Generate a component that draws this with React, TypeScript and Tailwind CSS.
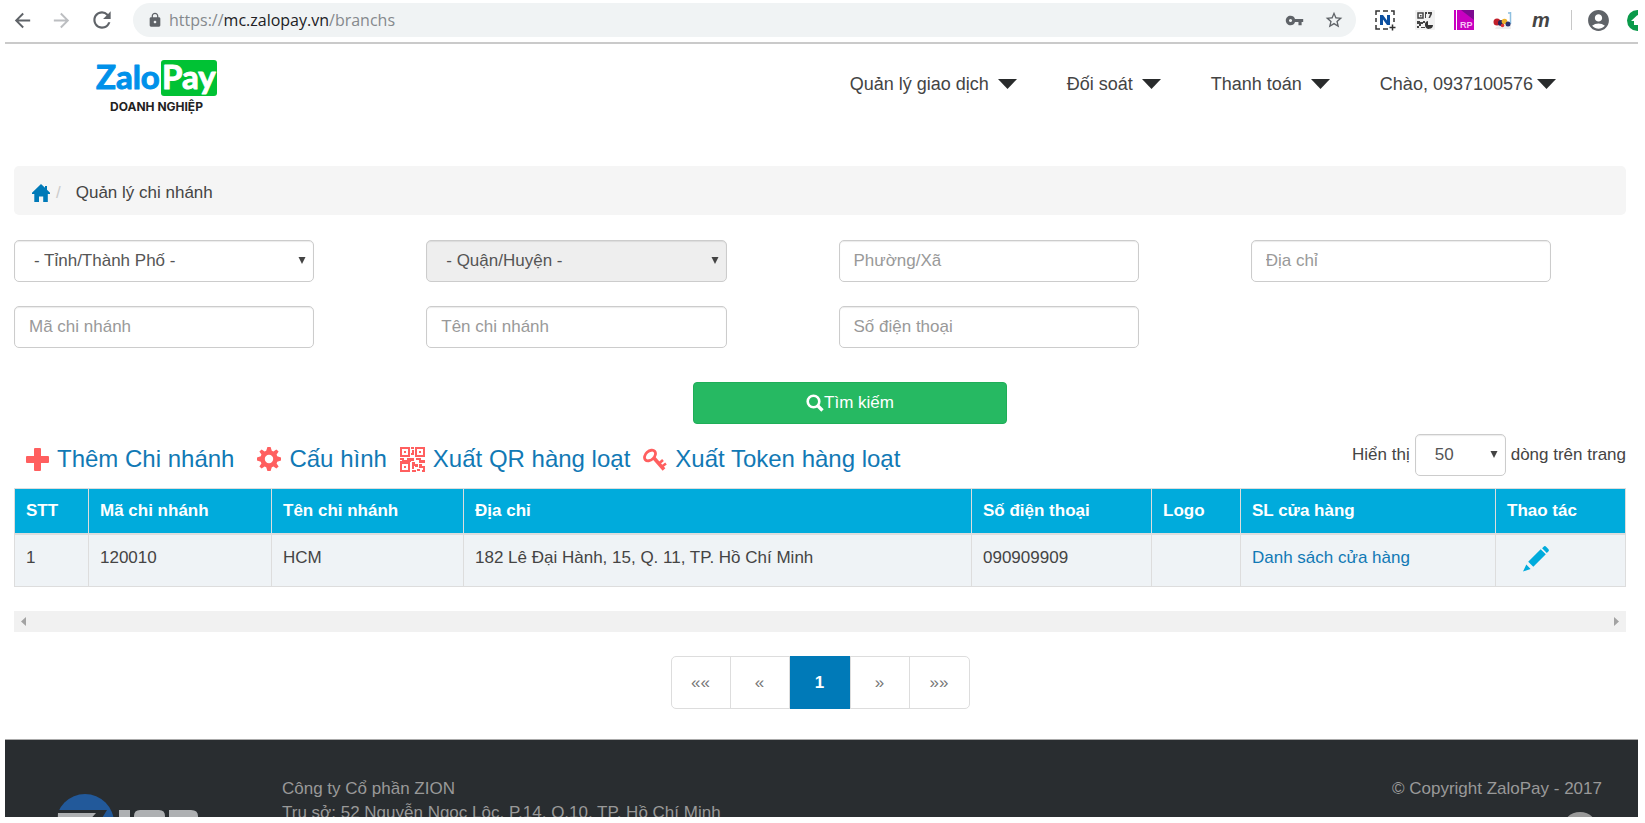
import { useState } from "react";
import type { InputHTMLAttributes, ReactNode, SelectHTMLAttributes } from "react";
import clsx from "clsx";
import {
  MdAccountCircle,
  MdArrowBack,
  MdArrowForward,
  MdLock,
  MdRefresh,
  MdStarBorder,
  MdVpnKey,
} from "react-icons/md";

const NAV_ITEMS = ["Quản lý giao dịch", "Đối soát", "Thanh toán"];

const COLUMNS = [
  { label: "STT", width: "w-[74px]" },
  { label: "Mã chi nhánh", width: "w-[183px]" },
  { label: "Tên chi nhánh", width: "w-[192px]" },
  { label: "Địa chỉ", width: "" },
  { label: "Số điện thoại", width: "w-[180px]" },
  { label: "Logo", width: "w-[89px]" },
  { label: "SL cửa hàng", width: "w-[255px]" },
  { label: "Thao tác", width: "w-[130px]" },
];

const BRANCHES = [
  {
    id: 1,
    code: "120010",
    name: "HCM",
    address: "182 Lê Đại Hành, 15, Q. 11, TP. Hồ Chí Minh",
    phone: "090909909",
  },
];

const PAGES = ["««", "«", "1", "»", "»»"];

const Caret = () => (
  <svg viewBox="0 0 19 10" className="h-[10px] w-[19px] fill-[#292b2c]">
    <path d="M0 0h19L9.500 10z" />
  </svg>
);

const HomeIcon = () => (
  <svg viewBox="0 0 18 18" className="h-[18px] w-[18px] fill-[#007ab8]">
    <path d="M9 0l4 3.800V2h2v3.700l3 3.100v1.200h-2.200V18h-4.600v-5.500H7V18H2.300v-8H0V8.800z" />
  </svg>
);

const SearchIcon = () => (
  <svg viewBox="0 0 18 18" className="h-[18px] w-[18px]" fill="none" stroke="currentColor">
    <circle cx="7.500" cy="7.500" r="5.800" strokeWidth="2.600" />
    <path d="M11.500 11.500l5 5" strokeWidth="3.400" />
  </svg>
);

const PlusIcon = () => (
  <svg viewBox="0 0 23 23" className="h-[23px] w-[23px] fill-[#ff5f5f]">
    <path d="M9 0h5q1 0 1 1v7h7q1 0 1 1v5q0 1-1 1h-7v7q0 1-1 1H9q-1 0-1-1v-7H1q-1 0-1-1V9q0-1 1-1h7V1q0-1 1-1z" />
  </svg>
);

const CogIcon = () => (
  <svg viewBox="-12 -12 24 24" className="h-6 w-6 fill-[#ff5f5f]">
    <path
      fillRule="evenodd"
      d="M-2.800-8.200L-1.600-12H1.600L2.800-8.200 4.400-7.600 7.400-9.600 9.600-7.400 7.600-4.400 8.200-2.800 12-1.600V1.600L8.200 2.800 7.600 4.400 9.600 7.400 7.400 9.600 4.400 7.600 2.800 8.200 1.600 12H-1.600L-2.800 8.200-4.400 7.600-7.400 9.600-9.600 7.400-7.600 4.400-8.200 2.800-12 1.600V-1.600L-8.200-2.800-7.600-4.400-9.600-7.400-7.400-9.600-4.400-7.600zM0-4.200A4.200 4.200 0 1 0 0 4.200 4.200 4.200 0 1 0 0-4.200z"
    />
  </svg>
);

const QrIcon = () => (
  <svg viewBox="0 0 25 25" className="h-[25px] w-[25px]" shapeRendering="crispEdges">
    <g fill="none" stroke="#ff5f5f" strokeWidth="2">
      <rect x="1" y="1" width="8" height="8" />
      <rect x="16" y="1" width="8" height="8" />
      <rect x="1" y="16" width="8" height="8" />
    </g>
    <path
      fill="#ff5f5f"
      d="M4 4h2v2H4zM19 4h2v2h-2zM4 19h2v2H4zM11 0h3v2h-3zM12 3h2v5h-3V6h1zM0 11h4v2h3v-2h7v3h-3v1H0v-1h2v-1H0zM16 11h5v2h4v3h-6v-3h-3zM12 15h3v2h3v3h-3v-1h-1v3h-2zM19 17h3v2h3v4h-2v-2h-4zM12 23h4v2h-4zM17 22h3v2h-3zM22 23h3v2h-3z"
    />
  </svg>
);

const KeyIcon = () => (
  <svg viewBox="0 0 24 23" className="h-[23px] w-6" fill="none" stroke="#ff5f5f">
    <ellipse cx="7" cy="7.500" rx="6.300" ry="4.300" strokeWidth="2.800" transform="rotate(-42 7 7.500)" />
    <path d="M10.500 9.500L21 21.500" strokeWidth="3.600" />
    <path d="M16 15.500l4-3.500M19 18.500l4-3" strokeWidth="2.600" />
  </svg>
);

const PencilIcon = () => (
  <svg viewBox="0 0 26 26" className="h-[26px] w-[26px] fill-[#00abdc]">
    <path d="M20.600.700a1.800 1.800 0 0 1 2.500 0l2.200 2.200a1.800 1.800 0 0 1 0 2.500l-1.500 1.500L19.100 2.200zM17.700 3.200L22.800 8.300 10.300 20.800 5.200 15.700zM3.300 18.600L7.600 22.900 0 25.500z" />
  </svg>
);

const ClipperIcon = () => (
  <svg viewBox="0 0 21 21" className="h-[21px] w-[21px]" fill="none">
    <path
      d="M1 5V1h4M8 1h5M16 1h3v4M1 8v4M1 15v4h4M19 8v4M8 19h5"
      stroke="#333"
      strokeWidth="1.500"
    />
    <path d="M5 15V5h3l4 5.500V5h3v10h-3L8 9.500V15z" fill="#0b4fa0" />
    <path d="M17.500 14.500v6M14.500 17.500h6" stroke="#333" strokeWidth="1.500" />
  </svg>
);

const QrExtensionIcon = () => (
  <svg viewBox="0 0 20 20" className="h-5 w-5">
    <rect width="20" height="20" rx="1" fill="#f1f1f1" />
    <rect x="3" y="3" width="5" height="5" fill="none" stroke="#444" strokeWidth="1.500" />
    <path
      fill="#444"
      d="M5 5h1.500v1.500H5zM10 2h2v2h-1v4h-1zM13 2h4v2l-2 4h-1.500l1.500-4h-2zM2 11h3v1h3v2H6v2H4v-2H2zM8 11h2v2H8zM2 16h2v2H2zM6 17h4v1H6z"
    />
    <path d="M13 11v4h5a4 4 0 1 1-5-4z" fill="#333" />
  </svg>
);

const RpIcon = () => (
  <svg viewBox="0 0 20 20" className="h-5 w-5">
    <rect width="20" height="20" fill="#c800c0" />
    <path d="M7 0h13v10z" fill="#7d0a90" />
    <path d="M2.500 0v20" stroke="#fff" />
    <text x="6" y="18" fill="#f7c4f5" fontSize="9" fontWeight="700" fontFamily="Liberation Sans, sans-serif">
      RP
    </text>
  </svg>
);

const BallsIcon = () => (
  <svg viewBox="0 0 20 20" className="h-5 w-5">
    <path d="M3 17l15-4v6H2z" fill="#eee" />
    <path d="M17.500 2v12M15 3h3" stroke="#8fc0e0" strokeWidth="1.500" />
    <circle cx="4" cy="12" r="3.500" fill="#c2202b" />
    <circle cx="8" cy="13" r="3" fill="#26265e" />
    <circle cx="11.500" cy="11.500" r="2.800" fill="#edb12c" />
    <circle cx="15" cy="14" r="2.500" fill="#28306e" />
    <circle cx="9.500" cy="15.500" r="1.800" fill="#d33" />
  </svg>
);

const BrowserBar = () => (
  <div className="flex h-11 items-center overflow-hidden border-b-2 border-[#cacaca] pl-[6px] pb-[2px] text-[#5f6368]">
    <button aria-label="Back" className="mr-4">
      <MdArrowBack size={23} />
    </button>
    <button aria-label="Forward" className="mr-4 text-[#bcbec1]">
      <MdArrowForward size={23} />
    </button>
    <button aria-label="Reload" className="mr-[18px]">
      <MdRefresh size={26} />
    </button>
    <div className="flex h-[34px] flex-1 items-center rounded-full bg-[#f0f3f4] pl-[14px] pr-3">
      <MdLock size={16} />
      <p className="ml-[6px] flex-1 font-['Open_Sans',sans-serif] text-base text-[#85898d]">
        https://<span className="text-[#202124]">mc.zalopay.vn</span>/branchs
      </p>
      <MdVpnKey size={19} className="mr-5" />
      <MdStarBorder size={20} />
    </div>
    <div className="flex items-center gap-[19px] pl-[19px]">
      <ClipperIcon />
      <QrExtensionIcon />
      <RpIcon />
      <BallsIcon />
      <span className="w-5 text-xl leading-5 font-bold italic text-[#444]">m</span>
      <span className="h-5 w-px bg-[#c8c8c8]" />
    </div>
    <MdAccountCircle size={25} className="ml-[14px]" />
    <div className="ml-4 flex h-[21px] w-[11px] shrink-0 overflow-hidden">
      <svg viewBox="0 0 21 21" className="h-[21px] w-[21px] shrink-0">
        <circle cx="10.500" cy="10.500" r="10.500" fill="#0a9a4a" />
        <path d="M4 11l6.500-6 6.500 6h-3v4H7v-4z" fill="#fff" />
      </svg>
    </div>
  </div>
);

const Logo = () => (
  <a href="#" className="flex flex-col items-center">
    <svg viewBox="0 0 123 36" className="h-9 w-[123px] overflow-visible">
      <rect x="66" y="0" width="56" height="36" rx="3" fill="#00c234" />
      <g
        fontFamily="Lato, sans-serif"
        fontSize="33"
        fontWeight="700"
        strokeWidth="1"
        strokeLinejoin="round"
      >
        <text x="1" y="29" fill="#0091ea" stroke="#0091ea">
          Zalo
        </text>
        <text x="67" y="29" fill="#fff" stroke="#fff">
          Pay
        </text>
      </g>
    </svg>
    <span className="mt-1 font-['Inter',sans-serif] text-xs leading-[14px] font-bold text-[#222]">
      DOANH NGHIỆP
    </span>
  </a>
);

const Header = () => (
  <header className="flex items-start justify-between pt-4 pr-[82px] pb-[52px] pl-[90px]">
    <Logo />
    <nav className="mt-3 flex gap-[50px] text-lg leading-6">
      {NAV_ITEMS.map((item) => (
        <button key={item} className="flex items-center gap-[9px]">
          {item}
          <Caret />
        </button>
      ))}
      <button className="flex items-center gap-1">
        Chào, 0937100576
        <Caret />
      </button>
    </nav>
  </header>
);

const FIELD =
  "h-[42px] w-full rounded-[5px] border border-[#ccc] shadow-[inset_0_1px_1px_rgba(0,0,0,0.08)] outline-none";

const TextField = (props: InputHTMLAttributes<HTMLInputElement>) => (
  <input
    type="text"
    aria-label={props.placeholder}
    className={clsx(FIELD, "bg-white px-[14px] placeholder:text-[#999]")}
    {...props}
  />
);

type SelectFieldProps = SelectHTMLAttributes<HTMLSelectElement> & {
  label: string;
  children: ReactNode;
};

const SelectField = ({ label, children, ...props }: SelectFieldProps) => (
  <div className="relative">
    <select
      aria-label={label}
      className={clsx(
        FIELD,
        "appearance-none pr-5 pl-[19px] text-[#555] opacity-100",
        props.disabled ? "bg-[#eee]" : "bg-white"
      )}
      {...props}
    >
      {children}
    </select>
    <svg
      viewBox="0 0 8 8"
      className="pointer-events-none absolute top-[17px] right-2 h-[7px] w-2 fill-[#444]"
    >
      <path d="M0 0h8L4 8z" />
    </svg>
  </div>
);

const SearchForm = () => (
  <form className="mt-[25px]" onSubmit={(e) => e.preventDefault()}>
    <div className="mr-[75px] grid grid-cols-4 gap-x-28 gap-y-6">
      <SelectField label="Tỉnh/Thành Phố">
        <option>- Tỉnh/Thành Phố -</option>
      </SelectField>
      <SelectField label="Quận/Huyện" disabled>
        <option>- Quận/Huyện -</option>
      </SelectField>
      <TextField placeholder="Phường/Xã" />
      <TextField placeholder="Địa chỉ" />
      <TextField placeholder="Mã chi nhánh" />
      <TextField placeholder="Tên chi nhánh" />
      <TextField placeholder="Số điện thoại" />
    </div>
    <div className="mt-[34px] flex justify-center pl-[60px]">
      <button
        type="submit"
        className="flex h-[42px] w-[314px] items-center justify-center rounded-[4px] border border-[#1fae58] bg-[#26b962] text-white"
      >
        <SearchIcon />
        Tìm kiếm
      </button>
    </div>
  </form>
);

const ActionLink = ({ icon, children }: { icon: ReactNode; children: ReactNode }) => (
  <a href="#" className="flex items-center gap-2 text-2xl leading-8 text-[#1179b5]">
    {icon}
    {children}
  </a>
);

const Toolbar = () => {
  const [pageSize, setPageSize] = useState("50");

  return (
    <div className="mt-[10px] flex items-end justify-between">
      <div className="flex gap-[13px] pb-px pl-3">
        <div className="mr-[10px]">
          <ActionLink icon={<PlusIcon />}>Thêm Chi nhánh</ActionLink>
        </div>
        <ActionLink icon={<CogIcon />}>Cấu hình</ActionLink>
        <ActionLink icon={<QrIcon />}>Xuất QR hàng loạt</ActionLink>
        <ActionLink icon={<KeyIcon />}>Xuất Token hàng loạt</ActionLink>
      </div>
      <div className="flex items-center gap-[5px]">
        <span>Hiển thị</span>
        <div className="w-[91px]">
          <SelectField
            label="Hiển thị"
            value={pageSize}
            onChange={(e) => setPageSize(e.target.value)}
          >
            <option>50</option>
            <option>100</option>
          </SelectField>
        </div>
        <span>dòng trên trang</span>
      </div>
    </div>
  );
};

const BranchTable = () => (
  <table className="mt-3 w-full table-fixed border-collapse text-left">
    <thead>
      <tr className="bg-[#00abdc] text-white">
        {COLUMNS.map((column) => (
          <th
            key={column.label}
            className={clsx(
              "border border-b-2 border-[#ddd] px-[11px] py-[10px] leading-6 font-bold",
              column.width
            )}
          >
            {column.label}
          </th>
        ))}
      </tr>
    </thead>
    <tbody>
      {BRANCHES.map((branch) => (
        <tr
          key={branch.id}
          className="bg-[#eff3f6] align-top leading-6 *:border *:border-[#ddd] *:px-[11px] *:pt-[11px] *:pb-[10px]"
        >
          <td>{branch.id}</td>
          <td>{branch.code}</td>
          <td>{branch.name}</td>
          <td>{branch.address}</td>
          <td>{branch.phone}</td>
          <td />
          <td>
            <a href="#" className="text-[#1179b5]">
              Danh sách cửa hàng
            </a>
          </td>
          <td>
            <button aria-label="Sửa" className="ml-4 block pb-1">
              <PencilIcon />
            </button>
          </td>
        </tr>
      ))}
    </tbody>
  </table>
);

const ScrollTrack = () => (
  <div className="mt-6 flex h-[21px] items-center justify-between bg-[#f1f1f1] px-[7px]">
    <svg viewBox="0 0 5 9" className="h-[9px] w-[5px] fill-[#a3a3a3]">
      <path d="M5 0v9L0 4.500z" />
    </svg>
    <svg viewBox="0 0 5 9" className="h-[9px] w-[5px] fill-[#a3a3a3]">
      <path d="M0 0v9l5-4.500z" />
    </svg>
  </div>
);

const Pagination = () => (
  <div className="mt-6 mb-[30px] flex justify-center">
    <div className="flex h-[53px] rounded-[5px] border border-[#ddd]">
      {PAGES.map((page) => (
        <button
          key={page}
          className={clsx(
            "border-r border-[#ddd] last:border-r-0",
            page === "1"
              ? "-my-px w-[61px] bg-[#007ab8] font-bold text-white"
              : "w-[59px] text-[#777]"
          )}
        >
          {page}
        </button>
      ))}
    </div>
  </div>
);

const Footer = () => (
  <footer className="min-h-0 flex-1 overflow-hidden border-t border-[#aaa] bg-[#292d30] text-[#999]">
    <div className="flex items-start pt-[37px] pr-9 pl-[52px]">
      <svg viewBox="0 0 150 60" className="mt-[17px] h-[60px] w-[150px] shrink-0">
        <circle cx="28" cy="29" r="29" fill="#22599a" />
        <path d="M0 16h50l-8 13H0z" fill="#292d30" />
        <path d="M1 19h38l-18 20H0z" fill="#aeb0b2" />
        <path
          d="M62 16h11v32H62zM77 48V22q0-6 6-6h19q6 0 6 6v26H97V24h-9v24zM112 48V16h22q7 0 7 6v26h-11V24h-7v24z"
          fill="#aeb0b2"
        />
      </svg>
      <address className="ml-[75px] leading-6 not-italic">
        Công ty Cổ phần ZION
        <br />
        Trụ sở: 52 Nguyễn Ngọc Lộc, P.14, Q.10, TP. Hồ Chí Minh
      </address>
      <div className="ml-auto flex flex-col items-end leading-6">
        <p>© Copyright ZaloPay - 2017</p>
        <span className="mt-[11px] mr-1 h-9 w-9 rounded-full bg-[#999]" />
      </div>
    </div>
  </footer>
);

const App = () => (
  <div className="flex h-screen flex-col overflow-hidden bg-white pr-[7px] pb-[6px] pl-[5px] font-['Liberation_Sans',Arial,sans-serif] text-[17px] text-[#444]">
    <BrowserBar />
    <Header />
    <main className="pr-3 pl-[9px]">
      <nav
        aria-label="breadcrumb"
        className="flex items-center rounded-[5px] bg-[#f5f5f5] px-[18px] pt-[14px] pb-[10px] leading-[25px]"
      >
        <a href="#" aria-label="Trang chủ">
          <HomeIcon />
        </a>
        <span className="ml-[6px] text-[#ccc]">/</span>
        <span className="ml-[15px]">Quản lý chi nhánh</span>
      </nav>
      <SearchForm />
      <Toolbar />
      <BranchTable />
      <ScrollTrack />
      <Pagination />
    </main>
    <Footer />
  </div>
);

export default App;
